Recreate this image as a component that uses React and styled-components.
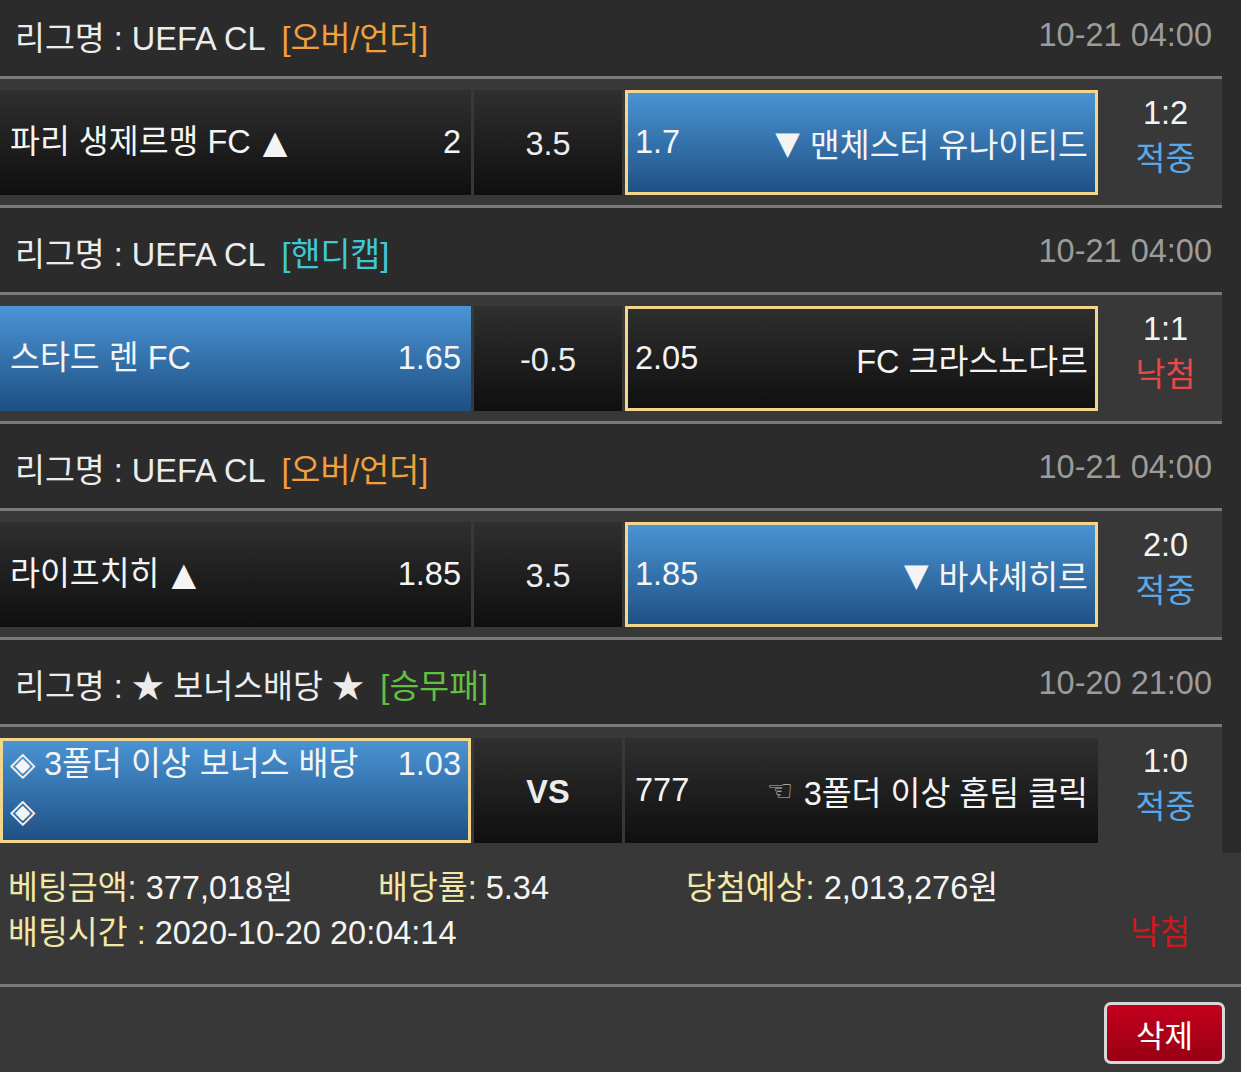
import React from 'react';
import styled, { createGlobalStyle } from 'styled-components';

const COLORS = {
  page: '#2b2b2b',
  row: '#383838',
  line: '#7a7a7a',
  text: '#ececec',
  date: '#9c9c9c',
  pick: '#f3d68c',
  hit: '#5aa8e6',
  miss: '#e64848',
  label: '#f2e8a8',
};

const FONT = '"Liberation Sans", "Noto Sans CJK KR", sans-serif';

const TAG_COLORS = {
  '오버/언더': '#f0a03c',
  '핸디캡': '#40c8d8',
  '승무패': '#62c040',
};

const bets = [
  {
    league: 'UEFA CL',
    tag: '오버/언더',
    date: '10-21 04:00',
    home: { name: '파리 생제르맹 FC', arrow: '▲', odds: '2' },
    mid: '3.5',
    away: { name: '맨체스터 유나이티드', arrow: '▼', odds: '1.7', win: true, picked: true },
    score: '1:2',
    hit: true,
  },
  {
    league: 'UEFA CL',
    tag: '핸디캡',
    date: '10-21 04:00',
    home: { name: '스타드 렌 FC', odds: '1.65', win: true },
    mid: '-0.5',
    away: { name: 'FC 크라스노다르', odds: '2.05', picked: true },
    score: '1:1',
    hit: false,
  },
  {
    league: 'UEFA CL',
    tag: '오버/언더',
    date: '10-21 04:00',
    home: { name: '라이프치히', arrow: '▲', odds: '1.85' },
    mid: '3.5',
    away: { name: '바샤셰히르', arrow: '▼', odds: '1.85', win: true, picked: true },
    score: '2:0',
    hit: true,
  },
  {
    league: '★ 보너스배당 ★',
    tag: '승무패',
    date: '10-20 21:00',
    home: { name: '◈ 3폴더 이상 보너스 배당 ◈', odds: '1.03', win: true, picked: true },
    mid: 'VS',
    away: { name: '3폴더 이상 홈팀 클릭', odds: '777', hand: true },
    score: '1:0',
    hit: true,
    last: true,
  },
];

const App = () => (
  <>
    <GlobalStyle />
    <List>
      {bets.map((bet, i) => (
        <Block key={i}>
          <Header>
            <League>
              리그명 : {bet.league}
              <Tag $color={TAG_COLORS[bet.tag]}>[{bet.tag}]</Tag>
            </League>
            <DateText>{bet.date}</DateText>
          </Header>
          <Row $last={bet.last}>
            <Cell $win={bet.home.win} $picked={bet.home.picked} $top={bet.last}>
              <HomeName>
                {bet.home.name}
                {bet.home.arrow && <Arrow $side="home">{bet.home.arrow}</Arrow>}
              </HomeName>
              <Odds>{bet.home.odds}</Odds>
            </Cell>
            <MidCell $bold={bet.mid === 'VS'}>{bet.mid}</MidCell>
            <Cell $win={bet.away.win} $picked={bet.away.picked}>
              <Odds>{bet.away.odds}</Odds>
              <AwayName>
                {bet.away.hand && <Hand>☜</Hand>}
                {bet.away.arrow && <Arrow $side="away">{bet.away.arrow}</Arrow>}
                {bet.away.name}
              </AwayName>
            </Cell>
            <Result>
              <Score>{bet.score}</Score>
              <Status $hit={bet.hit}>{bet.hit ? '적중' : '낙첨'}</Status>
            </Result>
          </Row>
        </Block>
      ))}
    </List>
    <Summary>
      <SummaryLine>
        <Field $width="370px">
          <Label>베팅금액:</Label> 377,018원
        </Field>
        <Field $width="308px">
          <Label>배당률:</Label> 5.34
        </Field>
        <Field>
          <Label>당첨예상:</Label> 2,013,276원
        </Field>
      </SummaryLine>
      <SummaryLine>
        <Field $width="1122px">
          <Label>배팅시간 :</Label> 2020-10-20 20:04:14
        </Field>
        <FinalStatus>낙첨</FinalStatus>
      </SummaryLine>
    </Summary>
    <Actions>
      <DeleteButton type="button">삭제</DeleteButton>
    </Actions>
  </>
);

export default App;

const GlobalStyle = createGlobalStyle`
  body {
    margin: 0;
    background: ${COLORS.page};
    color: ${COLORS.text};
    font-family: ${FONT};
    overflow: hidden;
  }
`;

const List = styled.div`
  width: 1222px;
  margin-top: -8px;
`;

const Block = styled.section``;

const Header = styled.div`
  display: flex;
  align-items: center;
  justify-content: space-between;
  height: 87px;
  padding: 2px 10px 0 15px;
  box-sizing: border-box;
  font-size: 32.5px;
  border-bottom: 3px solid ${COLORS.line};
`;

const League = styled.div`
  white-space: nowrap;
`;

const Tag = styled.span`
  margin-left: 16px;
  color: ${(p) => p.$color};
`;

const DateText = styled.div`
  color: ${COLORS.date};
`;

const Row = styled.div`
  display: grid;
  grid-template-columns: 471px 148px 473px 1fr;
  grid-template-rows: 105px;
  column-gap: 3px;
  padding: 11px 0 10px;
  background: ${COLORS.row};
  border-bottom: ${(p) => (p.$last ? 'none' : `3px solid ${COLORS.line}`)};
  font-size: 32.5px;
`;

const Cell = styled.div`
  display: flex;
  align-items: ${(p) => (p.$top ? 'flex-start' : 'center')};
  justify-content: space-between;
  gap: 12px;
  height: 105px;
  box-sizing: border-box;
  padding: 0 7px;
  border: 3px solid ${(p) => (p.$picked ? COLORS.pick : 'transparent')};
  background: ${(p) =>
    p.$win
      ? 'linear-gradient(to bottom, #4b95d6, #1e4f82)'
      : 'linear-gradient(to bottom, #2f2f2f, #0f0f0f)'};
  background-origin: border-box;
  color: #f4f4f4;
`;

const HomeName = styled.div`
  max-width: 360px;
  line-height: 47px;
`;

const Arrow = styled.span`
  display: inline-block;
  font-family: "DejaVu Sans", sans-serif;
  font-size: 32px;
  margin: ${(p) => (p.$side === 'home' ? '0 0 0 12px' : '0 10px 0 0')};
`;

const AwayName = styled.div`
  display: flex;
  align-items: center;
  white-space: nowrap;
`;

const Hand = styled.span`
  font-family: "DejaVu Sans", sans-serif;
  font-size: 30px;
  color: #bdbdbd;
  margin-right: 10px;
`;

const Odds = styled.div`
  line-height: 47px;
  white-space: nowrap;
`;

const MidCell = styled.div`
  display: flex;
  align-items: center;
  justify-content: center;
  height: 105px;
  padding-top: 4px;
  box-sizing: border-box;
  background: linear-gradient(to bottom, #2f2f2f, #0f0f0f);
  font-weight: ${(p) => (p.$bold ? 700 : 400)};
`;

const Result = styled.div`
  display: flex;
  flex-direction: column;
  align-items: center;
  justify-content: center;
  height: 105px;
  box-sizing: border-box;
  padding: 0 0 14px 8px;
  line-height: 46px;
`;

const Score = styled.div`
  color: #f4f4f4;
`;

const Status = styled.div`
  color: ${(p) => (p.$hit ? COLORS.hit : COLORS.miss)};
`;

const Summary = styled.div`
  background: ${COLORS.row};
  padding: 13px 8px 28px;
  font-size: 32.5px;
  line-height: 45px;
  border-bottom: 3px solid ${COLORS.line};
`;

const SummaryLine = styled.div`
  display: flex;
  align-items: center;
`;

const Field = styled.div`
  width: ${(p) => p.$width || 'auto'};
  white-space: nowrap;
  color: #f4f4f4;
`;

const Label = styled.span`
  color: ${COLORS.label};
`;

const FinalStatus = styled.div`
  color: #d4141e;
`;

const Actions = styled.div`
  display: flex;
  justify-content: flex-end;
  background: ${COLORS.row};
  padding: 15px 16px 30px;
`;

const DeleteButton = styled.button`
  width: 121px;
  height: 62px;
  border: 3px solid #d8d8d8;
  border-radius: 7px;
  background: linear-gradient(to bottom, #c4001e, #980014);
  color: #fff;
  font-family: ${FONT};
  font-size: 31px;
  cursor: pointer;
`;
